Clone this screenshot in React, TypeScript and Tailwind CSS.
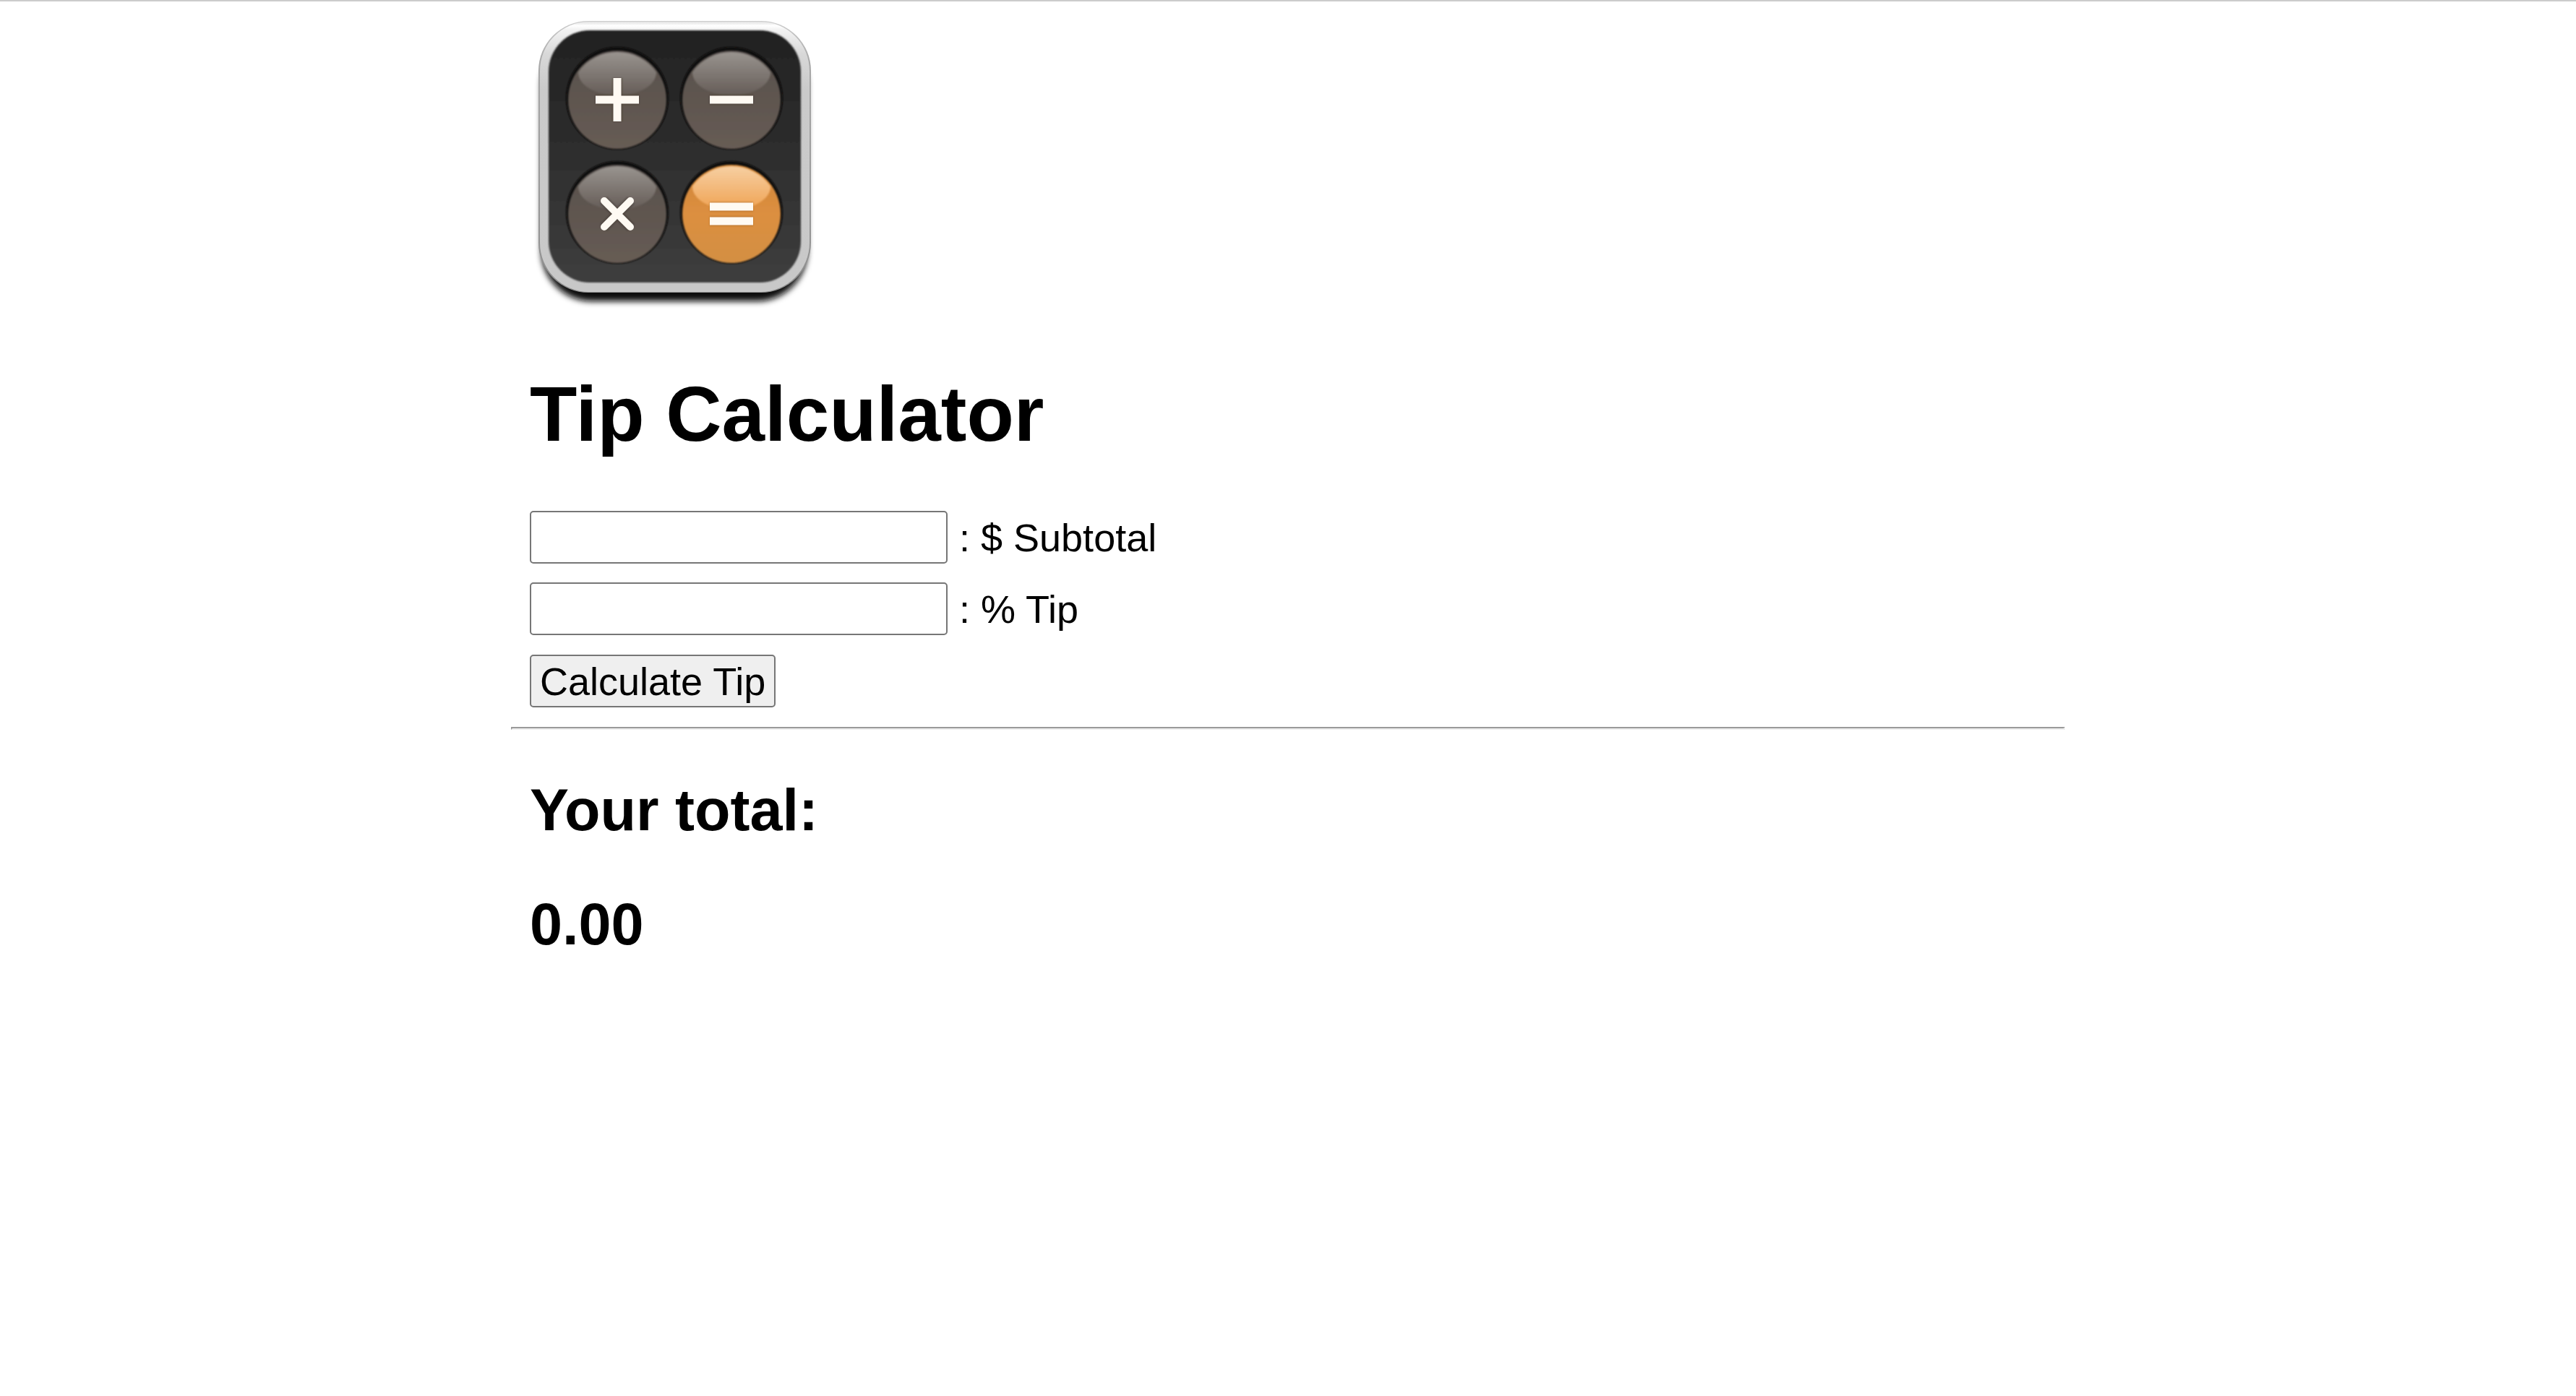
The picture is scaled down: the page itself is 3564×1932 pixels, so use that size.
import { useState } from "react";
import type { FormEvent } from "react";

type KeyProps = { cx: number; cy: number; accent?: boolean };

function Key({ cx, cy, accent = false }: KeyProps) {
  return (
    <g transform={`translate(${cx} ${cy})`}>
      <circle cy={-2} r={71} fill="#0d0a09" filter="url(#soft)" />
      <circle r={68} fill={accent ? "url(#orange)" : "url(#brown)"} filter="url(#soft)" />
      <path
        d="M-54 -38A66 66 0 0 1 54 -38C54 -20 30 -6 0 -6C-30 -6 -54 -20 -54 -38Z"
        fill={accent ? "url(#orangeGloss)" : "url(#brownGloss)"}
        filter="url(#soft)"
      />
    </g>
  );
}

function CalculatorLogo() {
  return (
    <svg className="block size-[400px]" viewBox="0 0 400 400" role="img" aria-label="Calculator">
      <defs>
        <linearGradient id="frame" x1="0" y1="0" x2="0" y2="1">
          <stop offset="0" stopColor="#e2e2e2" />
          <stop offset="0.015" stopColor="#ffffff" />
          <stop offset="0.03" stopColor="#f2f2f2" />
          <stop offset="0.12" stopColor="#d8d8d8" />
          <stop offset="0.25" stopColor="#cacaca" />
          <stop offset="1" stopColor="#c8c8c8" />
        </linearGradient>
        <linearGradient id="frameEdge" x1="0" y1="0" x2="0" y2="1">
          <stop offset="0" stopColor="#cccccc" />
          <stop offset="0.15" stopColor="#a8a8a8" />
          <stop offset="1" stopColor="#8e8e8e" />
        </linearGradient>
        <linearGradient id="face" x1="0" y1="0" x2="0" y2="1">
          <stop offset="0" stopColor="#222222" />
          <stop offset="0.5" stopColor="#2e2e2e" />
          <stop offset="1" stopColor="#3e3e3e" />
        </linearGradient>
        <linearGradient id="brown" x1="0" y1="0" x2="0" y2="1">
          <stop offset="0" stopColor="#57504d" />
          <stop offset="0.5" stopColor="#5f5650" />
          <stop offset="1" stopColor="#675c54" />
        </linearGradient>
        <linearGradient id="brownGloss" x1="0" y1="0" x2="0" y2="1">
          <stop offset="0" stopColor="#99948f" />
          <stop offset="1" stopColor="#655c57" />
        </linearGradient>
        <linearGradient id="orange" x1="0" y1="0" x2="0" y2="1">
          <stop offset="0" stopColor="#d08538" />
          <stop offset="0.5" stopColor="#dc8f40" />
          <stop offset="1" stopColor="#d38f44" />
        </linearGradient>
        <linearGradient id="orangeGloss" x1="0" y1="0" x2="0" y2="1">
          <stop offset="0" stopColor="#f6cfa2" />
          <stop offset="1" stopColor="#f0a354" />
        </linearGradient>
        <filter id="soft" x="-10%" y="-10%" width="120%" height="120%">
          <feGaussianBlur stdDeviation="1" />
        </filter>
        <filter id="shadow" x="-10%" y="-10%" width="120%" height="120%">
          <feGaussianBlur stdDeviation="4" />
        </filter>
      </defs>

      <rect x="16" y="20" width="368" height="368" rx="70" fill="#0c0c0c" filter="url(#shadow)" />
      <rect x="12" y="0" width="377" height="376" rx="69" fill="url(#frameEdge)" />
      <rect x="14" y="1" width="373" height="374" rx="68" fill="url(#frame)" />
      <rect x="26" y="13" width="349" height="349" rx="57" fill="url(#face)" filter="url(#soft)" />

      <Key cx={121} cy={109} />
      <Key cx={279} cy={109} />
      <Key cx={121} cy={267} />
      <Key cx={279} cy={267} accent />

      <g stroke="#3b302a" strokeOpacity="0.5" strokeWidth="13" filter="url(#soft)">
        <path d="M91 109H151M121 79V139M249 109H309M102 248L140 286M140 248L102 286" />
        <path d="M249 257H309M249 277H309" stroke="#9a5a1c" />
      </g>
      <g stroke="#fffaf3" strokeWidth="11">
        <path d="M91 109H151M121 79V139M249 109H309M249 257H309M249 277H309" />
        <path d="M103 249L139 285M139 249L103 285" strokeWidth="10" strokeLinecap="round" />
      </g>
    </svg>
  );
}

type FieldProps = { id: string; label: string; value: string; onChange: (value: string) => void };

function Field({ id, label, value, onChange }: FieldProps) {
  return (
    <div className="flex items-center gap-4">
      <input
        id={id}
        type="text"
        value={value}
        onChange={(event) => onChange(event.target.value)}
        className="h-[73px] w-[578px] rounded-[5px] border-2 border-[#767676] bg-white px-1"
      />
      <label htmlFor={id}>{label}</label>
    </div>
  );
}

export default function App() {
  const [subtotal, setSubtotal] = useState("");
  const [tip, setTip] = useState("");
  const [total, setTotal] = useState(0);

  const calculate = (event: FormEvent) => {
    event.preventDefault();
    const amount = Number(subtotal) || 0;
    setTotal(amount + (amount * (Number(tip) || 0)) / 100);
  };

  return (
    <div className="min-h-screen border-t-2 border-[#cccccc] bg-white font-['Liberation_Sans',Arial,sans-serif] text-[54px] leading-[60px] text-black">
      <main className="mx-auto max-w-[2150px] pt-[27px]">
        <header className="px-[26px]">
          <CalculatorLogo />
          <h1 className="mt-[82px] text-[107px] leading-[124px] font-bold">Tip Calculator</h1>
        </header>
        <form onSubmit={calculate} className="mt-[72px] flex flex-col items-start gap-[27px] px-[26px]">
          <div className="flex flex-col gap-[26px]">
            <Field id="subtotal" label=": $ Subtotal" value={subtotal} onChange={setSubtotal} />
            <Field id="tip" label=": % Tip" value={tip} onChange={setTip} />
          </div>
          <button
            type="submit"
            className="h-[73px] rounded-[5px] border-2 border-[#767676] bg-[#efefef] px-3"
          >
            Calculate Tip
          </button>
        </form>
        <hr className="mt-[27px] border-2 border-t-[#9a9a9a] border-r-[#eeeeee] border-b-[#eeeeee] border-l-[#9a9a9a]" />
        <section className="mt-16 flex flex-col gap-16 px-[26px] text-[81px] leading-[94px] font-bold">
          <h2>Your total:</h2>
          <output htmlFor="subtotal tip">{total.toFixed(2)}</output>
        </section>
      </main>
    </div>
  );
}
